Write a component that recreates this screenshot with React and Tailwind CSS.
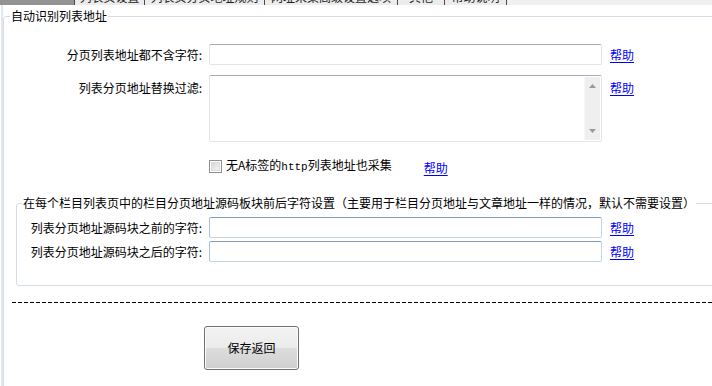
import React from "react";

function Help({ className = "" }) {
  return (
    <a href="#" className={"text-[#0000ff] underline underline-offset-2 leading-[14px] " + className}>
      帮助
    </a>
  );
}

function Tab({ w, dark, label }) {
  return (
    <div
      className={
        "h-full shrink-0 overflow-hidden border-r border-[#4a4a4a] flex justify-center " +
        (dark ? "bg-[#939393]" : "bg-[#ececec]")
      }
      style={{ width: w }}
    >
      <span className="mt-[-10px] leading-[14px] whitespace-nowrap text-[12px] text-[#222]">{label}</span>
    </div>
  );
}

function Input({ blue = false }) {
  return (
    <div
      className={
        "w-[393px] h-[21px] rounded-[2px] border bg-white " +
        (blue
          ? "border-[#c5d5e4] border-t-[#7f9db9] border-l-[#a9bfd4]"
          : "border-[#e0e6ec] border-t-[#abadb3]")
      }
    />
  );
}

export default function App() {
  return (
    <div className="w-[712px] h-[386px] overflow-hidden bg-white text-black text-[12px] font-['Noto_Sans_CJK_SC','Noto_Sans',sans-serif]">
      {/* tab strip */}
      <div className="h-[5px] flex bg-[#f0f0f0] overflow-hidden">
        <Tab w={75} dark label="" />
        <Tab w={70} label="列表页设置" />
        <Tab w={120} label="列表页分页地址规则" />
        <Tab w={133} label="网址采集高级设置选项" />
        <Tab w={47} label="其他" />
        <Tab w={62} label="帮助说明" />
      </div>

      <div className="flex pl-[1px]">
        <div className="w-[2px] shrink-0 bg-[#e4e8ec] self-stretch" />
        <fieldset className="mt-[4px] w-[740px] shrink-0 border border-[#d5dde6] rounded-[3px] pb-[40px]">
          <legend className="ml-[6px] px-[1px] leading-[14px] text-[12px]">自动识别列表地址</legend>

          {/* row 1 */}
          <div className="flex items-center mt-[21px]">
            <div className="w-[198px] text-right leading-[14px]">分页列表地址都不含字符:</div>
            <div className="ml-[7px]">
              <Input />
            </div>
            <Help className="ml-[8px]" />
          </div>

          {/* row 2 */}
          <div className="flex items-start mt-[10px]">
            <div className="w-[198px] text-right leading-[14px] mt-[6px]">列表分页地址替换过滤:</div>
            <div className="ml-[7px] w-[393px] h-[67px] rounded-[2px] border border-[#e0e6ec] border-t-[#abadb3] bg-white flex justify-end p-[1px]">
              <div className="w-[16px] h-full bg-[#efefef] flex flex-col items-center justify-between py-[7px] border-l border-[#f7f7f7]">
                <svg width="7" height="4" viewBox="0 0 7 4">
                  <path d="M0 4 L3.5 0 L7 4 Z" fill="#9a9a9a" />
                </svg>
                <svg width="7" height="4" viewBox="0 0 7 4">
                  <path d="M0 0 L7 0 L3.5 4 Z" fill="#9a9a9a" />
                </svg>
              </div>
            </div>
            <Help className="ml-[8px] mt-[6px]" />
          </div>

          {/* row 3 */}
          <div className="flex items-center mt-[15px] ml-[205px]">
            <div className="w-[13px] h-[13px] border border-[#8e8f8f] bg-white p-[1px]">
              <div className="w-full h-full bg-[linear-gradient(135deg,#d8d8d8,#f4f4f4)] border border-[#dcdcdc]" />
            </div>
            <span className="ml-[4px] leading-[14px]">
              无A标签的<span className="font-['Liberation_Mono',monospace] text-[11px]">http</span>列表地址也采集
            </span>
            <Help className="ml-[32px] mt-[4px]" />
          </div>

          {/* inner fieldset */}
          <fieldset className="mt-[21px] ml-[12px] border border-[#d5dde6] rounded-[3px] pb-[23px]">
            <legend className="ml-[5px] px-[1px] leading-[14px] text-[12px] whitespace-nowrap">
              在每个栏目列表页中的栏目分页地址源码板块前后字符设置（主要用于栏目分页地址与文章地址一样的情况，默认不需要设置）
            </legend>
            <div className="flex items-center mt-[7px]">
              <div className="w-[185px] text-right leading-[14px]">列表分页地址源码块之前的字符:</div>
              <div className="ml-[7px]">
                <Input blue />
              </div>
              <Help className="ml-[8px]" />
            </div>
            <div className="flex items-center mt-[3px]">
              <div className="w-[185px] text-right leading-[14px]">列表分页地址源码块之后的字符:</div>
              <div className="ml-[7px]">
                <Input blue />
              </div>
              <Help className="ml-[8px]" />
            </div>
          </fieldset>

          {/* dashed line */}
          <div className="mt-[16px] ml-[8px] h-px bg-[repeating-linear-gradient(to_right,#000_0px,#000_4px,transparent_4px,transparent_6px)]" />

          {/* button */}
          <div className="mt-[23px] ml-[200px]">
            <button className="w-[95px] h-[44px] rounded-[3px] border border-[#707070] bg-[linear-gradient(to_bottom,#f3f3f3_0%,#ebebeb_50%,#dddddd_50%,#cfcfcf_100%)] shadow-[inset_0_0_0_1px_#fcfcfc] text-[12px] leading-[14px]">
              保存返回
            </button>
          </div>
        </fieldset>
      </div>
    </div>
  );
}
